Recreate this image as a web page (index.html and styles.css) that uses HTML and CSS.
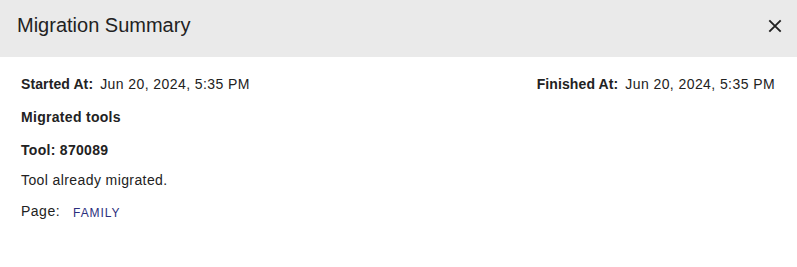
FILE: index.html
```html
<!DOCTYPE html>
<html lang="en">
<head>
<meta charset="utf-8">
<title>Migration Summary</title>
<link rel="stylesheet" href="styles.css">
</head>
<body>
<div class="dialog">
  <header class="dialog-header">
    <h2 class="dialog-title">Migration Summary</h2>
    <button class="close-btn" aria-label="Close">
      <svg width="14" height="14" viewBox="0 0 14 14" aria-hidden="true">
        <path d="M1.3 1.3 L12.7 12.7 M12.7 1.3 L1.3 12.7" stroke="#222" stroke-width="1.9" stroke-linecap="butt" fill="none"/>
      </svg>
    </button>
  </header>
  <div class="dialog-content">
    <div class="times">
      <div class="field"><span class="label">Started At:</span> <span class="value">Jun 20, 2024, 5:35 PM</span></div>
      <div class="field"><span class="label">Finished At:</span> <span class="value">Jun 20, 2024, 5:35 PM</span></div>
    </div>
    <div class="section-title">Migrated tools</div>
    <div class="tool-title">Tool: 870089</div>
    <div class="tool-msg">Tool already migrated.</div>
    <div class="page-row">
      <span class="page-label">Page:</span>
      <span class="page-link">FAMILY</span>
    </div>
  </div>
</div>
</body>
</html>
```
FILE: styles.css
```css
html, body {
  margin: 0;
  padding: 0;
  background: #ffffff;
}
body {
  font-family: "Liberation Sans", Arial, Helvetica, sans-serif;
  color: #222222;
}
.dialog {
  width: 797px;
  min-height: 267px;
  background: #ffffff;
}
.dialog-header {
  box-sizing: border-box;
  height: 57px;
  background: #eaeaea;
  display: flex;
  justify-content: space-between;
  align-items: flex-start;
  padding: 13px 15px 0 17px;
}
.dialog-title {
  margin: 0;
  font-size: 20px;
  font-weight: 400;
  line-height: 24px;
  color: #222222;
}
.close-btn {
  border: 0;
  background: transparent;
  padding: 0;
  margin-top: 6px;
  width: 14px;
  height: 14px;
  display: block;
  cursor: pointer;
}
.close-btn svg {
  display: block;
}
.dialog-content {
  padding: 17px 22px 0 21px;
  font-size: 14px;
  line-height: 20px;
  letter-spacing: 0.15px;
}
.times {
  display: flex;
  justify-content: space-between;
}
.label {
  font-weight: 700;
  letter-spacing: 0.1px;
}
.value {
  margin-left: 3px;
  letter-spacing: 0.42px;
}
.section-title {
  margin-top: 13px;
  font-weight: 700;
  letter-spacing: 0.3px;
}
.tool-title {
  margin-top: 13px;
  font-weight: 700;
  letter-spacing: 0.3px;
}
.tool-msg {
  margin-top: 10px;
  letter-spacing: 0.4px;
}
.page-row {
  margin-top: 9px;
  display: flex;
  align-items: center;
}
.page-label {
  letter-spacing: 0.5px;
}
.page-link {
  margin-left: 13px;
  margin-top: 4px;
  font-size: 12px;
  letter-spacing: 0.9px;
  color: #2b2f7d;
}
```
